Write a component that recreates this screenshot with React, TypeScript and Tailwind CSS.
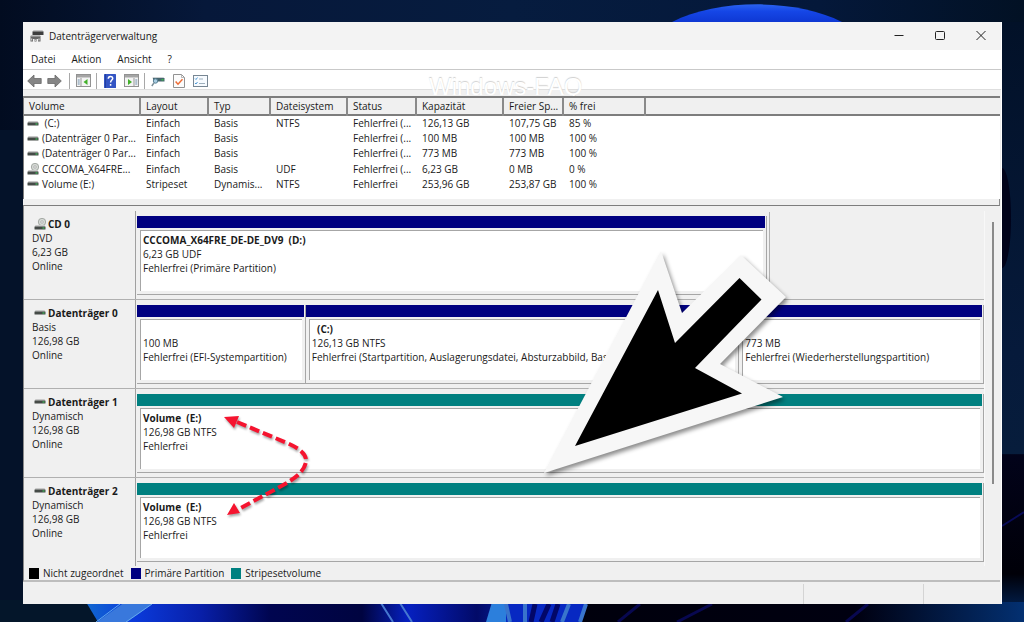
import type { ReactNode } from "react";

type Volume = {
  name: string;
  disc?: boolean;
  layout: string;
  type: string;
  fs: string;
  status: string;
  capacity: string;
  free: string;
  percent: string;
};

const volumes: Volume[] = [
  { name: "\u00a0(C:)", layout: "Einfach", type: "Basis", fs: "NTFS", status: "Fehlerfrei (...", capacity: "126,13 GB", free: "107,75 GB", percent: "85 %" },
  { name: "(Datenträger 0 Par...", layout: "Einfach", type: "Basis", fs: "", status: "Fehlerfrei (...", capacity: "100 MB", free: "100 MB", percent: "100 %" },
  { name: "(Datenträger 0 Par...", layout: "Einfach", type: "Basis", fs: "", status: "Fehlerfrei (...", capacity: "773 MB", free: "773 MB", percent: "100 %" },
  { name: "CCCOMA_X64FRE...", disc: true, layout: "Einfach", type: "Basis", fs: "UDF", status: "Fehlerfrei (...", capacity: "6,23 GB", free: "0 MB", percent: "0 %" },
  { name: "Volume (E:)", layout: "Stripeset", type: "Dynamis...", fs: "NTFS", status: "Fehlerfrei", capacity: "253,96 GB", free: "253,87 GB", percent: "100 %" },
];

const columns = [
  { title: "Volume", width: "w-[116px]" },
  { title: "Layout", width: "w-[68px]" },
  { title: "Typ", width: "w-[62px]" },
  { title: "Dateisystem", width: "w-[77px]" },
  { title: "Status", width: "w-[69px]" },
  { title: "Kapazität", width: "w-[87px]" },
  { title: "Freier Sp...", width: "w-[60px]" },
  { title: "% frei", width: "w-[82px]" },
];

const legend = [
  { label: "Nicht zugeordnet", color: "bg-black" },
  { label: "Primäre Partition", color: "bg-[#000080]" },
  { label: "Stripesetvolume", color: "bg-[#008080]" },
];

function DriveIcon({ disc = false }: { disc?: boolean }) {
  return (
    <svg className="h-3 w-3 shrink-0" viewBox="0 0 12 12" aria-hidden="true">
      {disc && (
        <>
          <circle cx="8" cy="4" r="3.7" fill="#d5d9d5" stroke="#959a96" strokeWidth="0.8" />
          <circle cx="8" cy="4" r="1.2" fill="#fff" stroke="#8a8a8a" strokeWidth="0.6" />
        </>
      )}
      <path d={disc ? "M1.5 7h9l1 2H.5z" : "M1.5 3h9l1 2H.5z"} fill="#c9c9c9" />
      <rect x="0.5" y={disc ? 8.5 : 4.5} width="11" height="3" rx="0.5" fill="#454a47" />
      <rect x="8.5" y={disc ? 9.3 : 5.3} width="2" height="1.4" fill="#3fae58" />
    </svg>
  );
}

function AppIcon() {
  return (
    <svg className="h-[14px] w-[14px]" viewBox="0 0 14 14" aria-hidden="true">
      <path d="M3.5 1h9l1 2h-11z" fill="#c4c4c4" />
      <rect x="2.5" y="2.5" width="11" height="3.5" fill="#3e3e3e" />
      <path d="M1 6h9l1 2H0z" fill="#bdbdbd" />
      <path d="M.5 7.500h10V12.500H8V10H6.500v2.500h-2V10H3v2.500H.5z" fill="#666" />
      <path d="M1.200 9.500h1v2h-1zM4.800 10.500h1v1.500h-1zM8.500 9.500h1v2h-1z" fill="#e4e4e4" />
    </svg>
  );
}

function NavArrow({ flip = false }: { flip?: boolean }) {
  return (
    <svg className="h-[14px] w-[15px]" viewBox="0 0 15 14" aria-hidden="true">
      <path
        d={flip ? "M14.300 7 8 1v3.500H.8v5H8V13z" : "M.7 7 7 1v3.500h7.200v5H7V13z"}
        fill="#858585"
        stroke="#686868"
        strokeWidth="0.8"
        strokeLinejoin="round"
      />
    </svg>
  );
}

function PaneIcon({ right = false }: { right?: boolean }) {
  return (
    <svg className="h-[13px] w-[15px]" viewBox="0 0 15 13" aria-hidden="true">
      <rect x="0.5" y="0.5" width="14" height="12" fill="#f4f4f4" stroke="#929292" />
      <rect x="1" y="1" width="13" height="2.500" fill="#a5a5a5" />
      <path d={right ? "M10 4v8" : "M5 4v8"} stroke="#999" />
      <path
        d={right ? "M11.300 6h2M11.300 8h2M11.300 10h2" : "M1.700 6h2M1.700 8h2M1.700 10h2"}
        stroke="#597f9f"
        strokeWidth="0.9"
      />
      <path d={right ? "M4 5v6l4-3z" : "M11.500 5v6l-4-3z"} fill="#43b02a" />
    </svg>
  );
}

function HelpIcon() {
  return (
    <svg className="h-[14px] w-3" viewBox="0 0 12 14" aria-hidden="true">
      <rect width="12" height="14" rx="0.600" fill="#3455c4" />
      <path d="M1.500 0v14" stroke="#2340a0" />
      <path d="M4.300 4.700c0-3 4.400-3 4.400-.3 0 1.700-2.100 1.700-2.100 4M6.600 10v1.700" fill="none" stroke="#fff" strokeWidth="1.500" />
    </svg>
  );
}

function ConnectIcon() {
  return (
    <svg className="h-[14px] w-[14px]" viewBox="0 0 14 14" aria-hidden="true">
      <path d="M2 3h10.500l1 1.500H1z" fill="#cbd0d2" />
      <rect x="2" y="4" width="11.500" height="3.500" fill="#47666f" />
      <rect x="10.500" y="5" width="2" height="1.500" fill="#39b54a" />
      <circle cx="4.500" cy="7" r="2.200" fill="#a7cbe0" stroke="#5c8397" />
      <path d="M3 8.800.8 12" stroke="#7b8f99" strokeWidth="1.500" />
    </svg>
  );
}

function CheckPageIcon() {
  return (
    <svg className="h-[14px] w-3" viewBox="0 0 12 14" aria-hidden="true">
      <path d="M.5.5h8l3 3v10H.5z" fill="#fcfcfc" stroke="#929292" />
      <path d="M8.500.5v3h3" fill="none" stroke="#a5a5a5" strokeWidth="0.800" />
      <path d="m2.600 7.500 2.400 2.700 4.500-5" fill="none" stroke="#ed6c35" strokeWidth="1.500" />
    </svg>
  );
}

function ListIcon() {
  return (
    <svg className="h-3 w-[15px]" viewBox="0 0 15 12" aria-hidden="true">
      <rect x="0.500" y="0.500" width="14" height="11" fill="#f7fbff" stroke="#778693" />
      <path d="m2 3.500 1 1 1.500-2M2 8l1 1 1.500-2" fill="none" stroke="#3d8fd0" strokeWidth="0.900" />
      <path d="M6 4h4M6 8.500h6" stroke="#9fb0bd" />
    </svg>
  );
}

function ToolButton({ label, children }: { label: string; children: ReactNode }) {
  return (
    <button type="button" aria-label={label} className="flex h-4 w-4 items-center justify-center">
      {children}
    </button>
  );
}

function Separator() {
  return <div className="mx-[5px] h-4 w-px bg-[#a8a8a8]" />;
}

type PartitionProps = {
  title?: string;
  lines: string[];
  color?: string;
};

function Partition({ title, lines, color = "bg-[#000080]" }: PartitionProps) {
  return (
    <div className="flex h-[79px] min-w-0 flex-col border-r border-b border-[#a6a6a6] pr-px">
      <div className={`h-3 shrink-0 ${color}`} />
      <div className="mt-[2px] mr-[2px] mb-[3px] ml-[3px] flex-1 overflow-hidden border-t border-l border-[#a6a6a6] bg-white pt-[2px] pl-[2px] leading-[14px] whitespace-nowrap">
        <p className="h-[14px] font-bold">{title}</p>
        {lines.map((line) => (
          <p key={line}>{line}</p>
        ))}
      </div>
    </div>
  );
}

type DiskProps = {
  name: string;
  kind: string;
  size: string;
  disc?: boolean;
  children: ReactNode;
};

function Disk({ name, kind, size, disc, children }: DiskProps) {
  return (
    <section className="flex border-b border-[#b0b0b0] last:border-b-0">
      <div className="w-28 shrink-0 border-r border-[#a0a0a0] pt-[6px] pl-2 leading-[14px]">
        <div className="flex items-center">
          <div className="w-4 pl-[2px]">
            <DriveIcon disc={disc} />
          </div>
          <h2 className="font-bold whitespace-nowrap">{name}</h2>
        </div>
        <p>{kind}</p>
        <p>{size}</p>
        <p>Online</p>
      </div>
      <div className="min-w-0 flex-1 pt-[5px] pb-1 pl-px">{children}</div>
    </section>
  );
}

function Wallpaper() {
  return (
    <svg className="absolute inset-0 h-full w-full" viewBox="0 0 1024 622" preserveAspectRatio="none" aria-hidden="true">
      <defs>
        <linearGradient id="sky">
          <stop offset="0" stopColor="#020c20" />
          <stop offset="0.200" stopColor="#06183a" />
          <stop offset="0.500" stopColor="#061c3f" />
          <stop offset="0.800" stopColor="#04183a" />
          <stop offset="1" stopColor="#021124" />
        </linearGradient>
        <linearGradient id="side" x2="0" y2="1">
          <stop offset="0" stopColor="#021128" />
          <stop offset="0.550" stopColor="#061a3b" />
          <stop offset="0.720" stopColor="#071d3c" />
          <stop offset="0.721" stopColor="#02031a" />
          <stop offset="0.920" stopColor="#000008" />
          <stop offset="1" stopColor="#032c68" />
        </linearGradient>
        <linearGradient id="floor">
          <stop offset="0" stopColor="#1168d0" />
          <stop offset="0.100" stopColor="#0b3bdc" />
          <stop offset="0.250" stopColor="#081fa8" />
          <stop offset="0.400" stopColor="#000550" />
          <stop offset="0.600" stopColor="#000440" />
          <stop offset="0.700" stopColor="#0620c0" />
          <stop offset="0.850" stopColor="#020a68" />
          <stop offset="1" stopColor="#0a35d0" />
        </linearGradient>
        <linearGradient id="corner">
          <stop offset="0" stopColor="#00000c" />
          <stop offset="0.650" stopColor="#000010" />
          <stop offset="1" stopColor="#033071" />
        </linearGradient>
        <linearGradient id="bloom" x2="0" y2="1">
          <stop offset="0" stopColor="#2a62f0" />
          <stop offset="0.300" stopColor="#1546e6" />
          <stop offset="1" stopColor="#0b30c8" />
        </linearGradient>
      </defs>
      <rect width="1024" height="622" fill="url(#sky)" />
      <path d="M672 22c45-23 124-24 170 0v6H672z" fill="url(#bloom)" />
      <rect x="1000" y="22" width="24" height="600" fill="url(#side)" />
      <ellipse cx="1002" cy="218" rx="9" ry="50" fill="#01031a" />
      <path d="M0 130h24v492H0z" fill="#041229" />
      <rect y="600" width="110" height="22" fill="#04162a" />
      <path d="M86 602h460v20H98z" fill="url(#floor)" />
      <path d="M125 602h30l-28 20H97z" fill="#3978dc" />
      <path d="M120 604 96 622M152 604l-26 18" stroke="#62a7ee" />
      <path d="m381 603 12 19M400 603l12 19" stroke="#4678d0" strokeWidth="2" />
      <path d="M492 602h14l6 20h-26z" fill="#2c7fdc" />
      <rect x="540" y="602" width="484" height="20" fill="url(#corner)" />
      <path d="M506 602h82l-7 20h-75z" fill="#0728c2" />
      <path d="m506 604 4 18M525 604v18M569 604l-7 18M586 604l-6 18" stroke="#3974cc" strokeWidth="4" />
      <path d="m535 604-4 18M549 604l-8 18M558 604l-6 18" stroke="#020768" strokeWidth="5" />
      <path d="m640 604-22 18M712 604l-35 18M868 604l-22 18" stroke="#080850" strokeWidth="3" />
      <path d="m1002 526 22-14" stroke="#090b58" strokeWidth="2" />
    </svg>
  );
}

function Annotations() {
  return (
    <svg className="pointer-events-none absolute top-0 left-0 h-[622px] w-[1024px]" viewBox="0 0 1024 622" aria-hidden="true">
      <g className="drop-shadow-[2px_3px_2px_rgba(0,0,0,0.45)]">
        <path d="M544 473 661 251l21 62 59-58 45 42-66 67 63 33z" fill="#f7f7f7" />
      </g>
      <path d="m575 446 83-156 17 53 64.500-65 22 21.500L695 368l47 25.500z" fill="#000" />
      <g className="drop-shadow-[1px_2px_1px_rgba(0,0,0,0.35)]">
        <path
          d="M237 422 287 443C301 449 307 455 306 462C304 472 295 478 285 484L239 509"
          fill="none"
          stroke="#f5142f"
          strokeWidth="4"
          strokeDasharray="10 4"
        />
        <path d="m224 417 15-1-5 12zM227 515l7-12 6 10z" fill="#f5142f" />
      </g>
    </svg>
  );
}

export default function App() {
  return (
    <main className="relative min-h-screen overflow-hidden bg-[#04132d] pt-[22px] pr-[22px] pb-[18px] pl-[23px] font-['Open_Sans','Noto_Sans',sans-serif] text-[10px] text-[#1a1a1a]">
      <Wallpaper />

      <div className="relative border-r border-white bg-[#f0f0f0]">
        <header className="flex h-7 items-center bg-[#f3f3f3] pl-[7px]">
          <AppIcon />
          <h1 className="ml-[5px] flex-1">Datenträgerverwaltung</h1>
          <div className="flex">
            <button type="button" aria-label="Minimieren" className="flex h-7 w-[41px] items-center justify-center">
              <svg className="h-3 w-3" viewBox="0 0 12 12"><path d="M1.500 5.500h9" stroke="#222" /></svg>
            </button>
            <button type="button" aria-label="Maximieren" className="flex h-7 w-[41px] items-center justify-center">
              <svg className="h-3 w-3" viewBox="0 0 12 12"><rect x="1.500" y="1.500" width="9" height="8" rx="1" fill="none" stroke="#222" /></svg>
            </button>
            <button type="button" aria-label="Schließen" className="flex h-7 w-[41px] items-center justify-center">
              <svg className="h-3 w-3" viewBox="0 0 12 12"><path d="m1.500 1 9 9m0-9-9 9" stroke="#222" /></svg>
            </button>
          </div>
        </header>

        <nav className="flex h-5 items-center gap-4 border-b border-[#c9c9c9] bg-white pl-2">
          <button type="button">Datei</button>
          <button type="button">Aktion</button>
          <button type="button">Ansicht</button>
          <button type="button">?</button>
        </nav>

        <div className="relative flex h-5 items-center border-b border-[#dedede] bg-white pt-[2px] pl-[3px]">
          <div className="flex gap-1 pr-[2px]">
            <ToolButton label="Zurück"><NavArrow /></ToolButton>
            <ToolButton label="Vorwärts"><NavArrow flip /></ToolButton>
          </div>
          <Separator />
          <ToolButton label="Konsolenstruktur"><PaneIcon /></ToolButton>
          <Separator />
          <div className="flex gap-[5px]">
            <ToolButton label="Hilfe"><HelpIcon /></ToolButton>
            <ToolButton label="Aktionsbereich"><PaneIcon right /></ToolButton>
          </div>
          <Separator />
          <div className="flex gap-[5px]">
            <ToolButton label="Verbinden"><ConnectIcon /></ToolButton>
            <ToolButton label="Prüfen"><CheckPageIcon /></ToolButton>
            <ToolButton label="Liste"><ListIcon /></ToolButton>
          </div>
          <span className="absolute top-[5px] left-[406px] font-['Liberation_Sans',sans-serif] text-2xl leading-6 text-white [text-shadow:0_-1px_1px_#cfcfcf]">
            Windows-FAQ
          </span>
        </div>

        <div className="relative mt-[6px] mr-px border-t-2 border-l border-[#7d7d7d] bg-white">
          <table className="h-[94px] w-full table-fixed border-collapse text-left whitespace-nowrap">
            <thead>
              <tr className="h-[17px] border-b-2 border-[#7d7d7d] bg-[#f0f0f0]">
                {columns.map((column) => (
                  <th key={column.title} scope="col" className={`${column.width} border-r-2 border-[#8a8a8a] p-0 pt-px pl-[5px] font-normal`}>
                    {column.title}
                  </th>
                ))}
                <td />
              </tr>
            </thead>
            <tbody>
              {volumes.map((volume, index) => (
                <tr key={index}>
                  <td className="p-0 pl-[3px]">
                    <div className="flex items-center gap-[3px]">
                      <DriveIcon disc={volume.disc} />
                      {volume.name}
                    </div>
                  </td>
                  <td className="p-0 pl-[6px]">{volume.layout}</td>
                  <td className="p-0 pl-[6px]">{volume.type}</td>
                  <td className="p-0 pl-[6px]">{volume.fs}</td>
                  <td className="p-0 pl-[6px]">{volume.status}</td>
                  <td className="p-0 pl-[6px]">{volume.capacity}</td>
                  <td className="p-0 pl-[6px]">{volume.free}</td>
                  <td className="p-0 pl-[6px]">{volume.percent}</td>
                  <td />
                </tr>
              ))}
            </tbody>
          </table>
          <div className="h-[7px]" />
        </div>
        <div className="mr-px h-[7px] border-r border-b border-b-[#7d7d7d] border-r-[#8a8a8a]" />

        <div className="mr-px flex border-l border-[#8a8a8a] pt-[5px]">
          <div className="min-w-0 flex-1">
            <Disk name="CD 0" kind="DVD" size="6,23 GB" disc>
              <div className="-mt-1 grid grid-cols-[634fr_214fr]">
                <div className="border-r border-[#b0b0b0] pt-1 pr-[2px]">
                  <Partition title={"CCCOMA_X64FRE_DE-DE_DV9\u00a0 (D:)"} lines={["6,23 GB UDF", "Fehlerfrei (Primäre Partition)"]} />
                </div>
              </div>
            </Disk>
            <Disk name="Datenträger 0" kind="Basis" size="126,98 GB">
              <div className="grid grid-cols-[169fr_434fr_245fr]">
                <Partition lines={["100 MB", "Fehlerfrei (EFI-Systempartition)"]} />
                <Partition
                  title={"\u00a0\u00a0(C:)"}
                  lines={["126,13 GB NTFS", "Fehlerfrei (Startpartition, Auslagerungsdatei, Absturzabbild, Basisdatenpartition)"]}
                />
                <Partition lines={["773 MB", "Fehlerfrei (Wiederherstellungspartition)"]} />
              </div>
            </Disk>
            <Disk name="Datenträger 1" kind="Dynamisch" size="126,98 GB">
              <Partition title={"Volume\u00a0 (E:)"} lines={["126,98 GB NTFS", "Fehlerfrei"]} color="bg-[#008080]" />
            </Disk>
            <Disk name="Datenträger 2" kind="Dynamisch" size="126,98 GB">
              <Partition title={"Volume\u00a0 (E:)"} lines={["126,98 GB NTFS", "Fehlerfrei"]} color="bg-[#008080]" />
            </Disk>
          </div>
          <div className="flex w-4 justify-center border-l border-[#f8f8f8]">
            <div className="mt-[11px] h-[262px] w-[2px] bg-[#8a8a8a]" />
          </div>
        </div>

        <ul className="mr-px flex h-4 items-center gap-[7px] border-b-2 border-l border-b-[#bdbdbd] border-l-[#8a8a8a] pl-[5px]">
          {legend.map((item) => (
            <li key={item.label} className="flex items-center gap-1">
              <span className={`h-[11px] w-[10px] ${item.color}`} />
              {item.label}
            </li>
          ))}
        </ul>
        <footer className="flex h-[22px] justify-end pt-[2px]">
          <div className="w-[120px] border-l border-[#d4d4d4]" />
          <div className="w-[78px] border-l border-[#d4d4d4]" />
        </footer>
      </div>

      <Annotations />
    </main>
  );
}
